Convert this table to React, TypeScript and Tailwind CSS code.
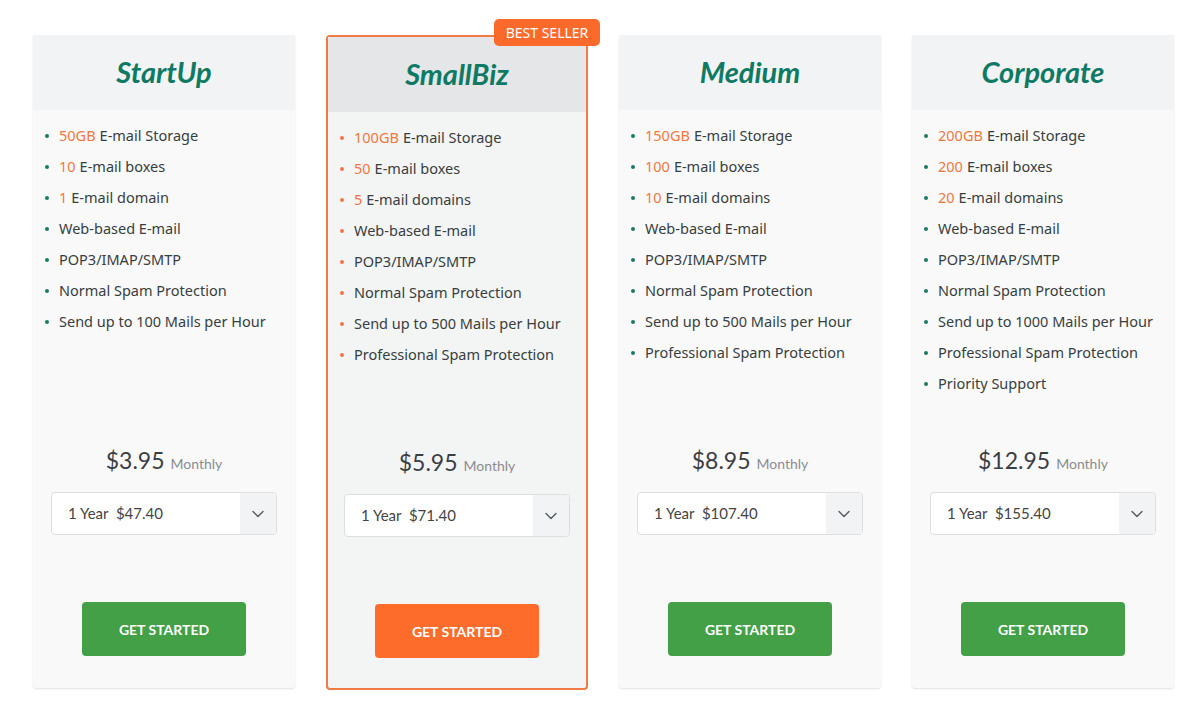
import { ChevronDown } from "lucide-react";

type Feature = { hi?: string; text: string };

type Plan = {
  name: string;
  price: string;
  year: string;
  featured?: boolean;
  features: Feature[];
};

const plans: Plan[] = [
  {
    name: "StartUp",
    price: "$3.95",
    year: "$47.40",
    features: [
      { hi: "50GB", text: "E-mail Storage" },
      { hi: "10", text: "E-mail boxes" },
      { hi: "1", text: "E-mail domain" },
      { text: "Web-based E-mail" },
      { text: "POP3/IMAP/SMTP" },
      { text: "Normal Spam Protection" },
      { text: "Send up to 100 Mails per Hour" },
    ],
  },
  {
    name: "SmallBiz",
    price: "$5.95",
    year: "$71.40",
    featured: true,
    features: [
      { hi: "100GB", text: "E-mail Storage" },
      { hi: "50", text: "E-mail boxes" },
      { hi: "5", text: "E-mail domains" },
      { text: "Web-based E-mail" },
      { text: "POP3/IMAP/SMTP" },
      { text: "Normal Spam Protection" },
      { text: "Send up to 500 Mails per Hour" },
      { text: "Professional Spam Protection" },
    ],
  },
  {
    name: "Medium",
    price: "$8.95",
    year: "$107.40",
    features: [
      { hi: "150GB", text: "E-mail Storage" },
      { hi: "100", text: "E-mail boxes" },
      { hi: "10", text: "E-mail domains" },
      { text: "Web-based E-mail" },
      { text: "POP3/IMAP/SMTP" },
      { text: "Normal Spam Protection" },
      { text: "Send up to 500 Mails per Hour" },
      { text: "Professional Spam Protection" },
    ],
  },
  {
    name: "Corporate",
    price: "$12.95",
    year: "$155.40",
    features: [
      { hi: "200GB", text: "E-mail Storage" },
      { hi: "200", text: "E-mail boxes" },
      { hi: "20", text: "E-mail domains" },
      { text: "Web-based E-mail" },
      { text: "POP3/IMAP/SMTP" },
      { text: "Normal Spam Protection" },
      { text: "Send up to 1000 Mails per Hour" },
      { text: "Professional Spam Protection" },
      { text: "Priority Support" },
    ],
  },
];

function PlanCard({ plan }: { plan: Plan }) {
  const f = plan.featured;
  return (
    <div
      className={
        f
          ? "relative flex h-[655px] w-[262px] flex-col rounded-[4px] border-2 border-[#ef7b44] bg-[#f3f4f4]"
          : "relative flex h-[653px] w-[262px] flex-col rounded-[3px] bg-[#f9f9f9] shadow-[0_1px_2px_rgba(0,0,0,0.12)]"
      }
    >
      {f && (
        <div className="absolute left-[166px] top-[-18px] flex h-[27px] w-[106px] items-center justify-center rounded-[5px] bg-[#fb6a2a] text-[14px] text-white">
          BEST SELLER
        </div>
      )}

      {/* Header */}
      <div
        className={`flex h-[75px] items-center justify-center pb-[2px] ${
          f ? "bg-[#e4e6e7]" : "bg-[#f1f3f4]"
        }`}
      >
        <h2 className="font-['Lato',sans-serif] text-[29px] font-bold italic text-[#0f7a63]">
          {plan.name}
        </h2>
      </div>

      {/* Features */}
      <ul className="h-[310px] pl-[12px] pt-[10px]">
        {plan.features.map((item, i) => (
          <li key={i} className="flex h-[31px] items-center text-[14.5px] text-[#37403f]">
            <span
              className={`mr-[10px] h-[4px] w-[4px] rounded-full ${
                f ? "bg-[#f07840]" : "bg-[#1a7a66]"
              }`}
            />
            {item.hi && <span className="mr-[4px] text-[#f07840]">{item.hi}</span>}
            {item.text}
          </li>
        ))}
      </ul>

      {/* Price + select + button */}
      <div className="flex flex-col items-center pt-[23px] font-['Lato',sans-serif]">
        <div className="flex h-[28px] items-baseline gap-[6px]">
          <span className="text-[23px] text-[#3a3f44]">{plan.price}</span>
          <span className="text-[14px] text-[#8a8d90]">Monthly</span>
        </div>
        <div className="mt-[21px] flex h-[43px] w-[226px] overflow-hidden rounded-[4px] border border-[#dcdee0] bg-white">
          <div className="flex flex-1 items-center pl-[16px] text-[15px] text-[#444]">
            1 Year&nbsp;&nbsp;{plan.year}
          </div>
          <div className="flex w-[36px] items-center justify-center bg-[#f1f3f5] text-[#5a6068]">
            <ChevronDown className="h-[20px] w-[20px]" strokeWidth={1.75} />
          </div>
        </div>
        <button
          className={`mt-[67px] h-[54px] w-[164px] rounded-[4px] text-[14px] font-bold text-white ${
            f ? "bg-[#fd6c2a]" : "bg-[#43a047]"
          }`}
        >
          GET STARTED
        </button>
      </div>
    </div>
  );
}

export default function App() {
  return (
    <div className="min-h-[707px] bg-white font-['Noto_Sans',sans-serif]">
      <div className="flex items-start gap-[31px] pl-[33px] pt-[35px]">
        {plans.map((p) => (
          <PlanCard key={p.name} plan={p} />
        ))}
      </div>
    </div>
  );
}
